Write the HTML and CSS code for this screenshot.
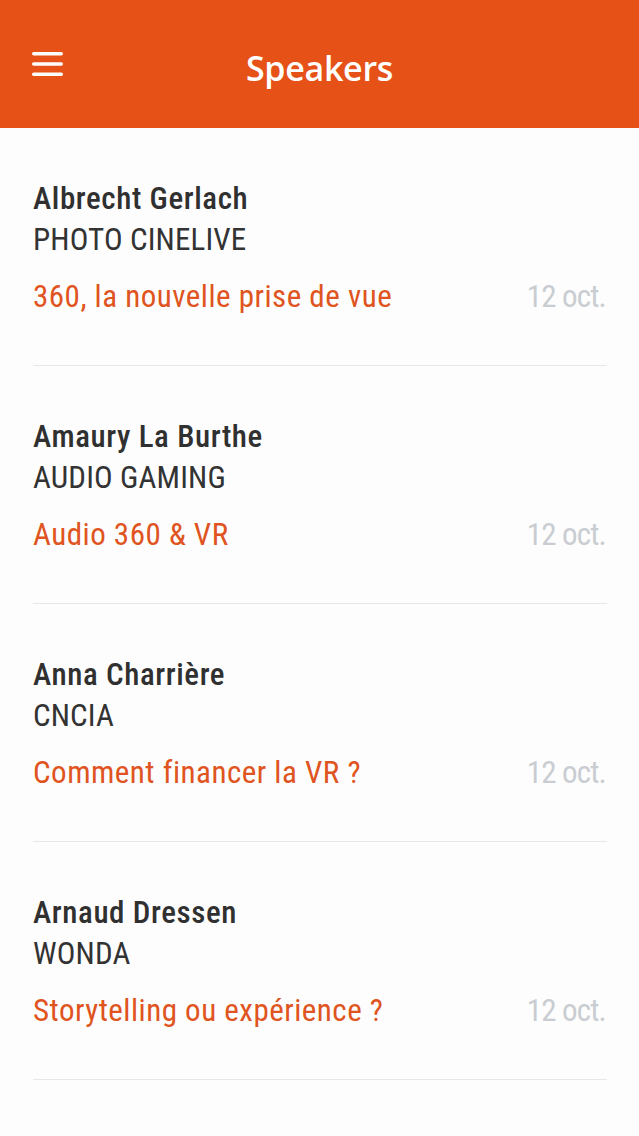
FILE: index.html
```html
<!DOCTYPE html>
<html lang="fr">
<head>
<meta charset="utf-8">
<title>Speakers</title>
<link rel="stylesheet" href="styles.css">
</head>
<body>
<header class="appbar">
  <div class="appbar-left">
    <svg class="menu-icon" width="31" height="24" viewBox="0 0 31 24" aria-hidden="true">
      <rect x="0" y="0" width="31" height="3.4" rx="1.7" fill="#fff"/>
      <rect x="0" y="10.3" width="31" height="3.4" rx="1.7" fill="#fff"/>
      <rect x="0" y="20.6" width="31" height="3.4" rx="1.7" fill="#fff"/>
    </svg>
  </div>
  <h1 class="appbar-title">Speakers</h1>
  <div class="appbar-right"></div>
</header>
<main class="list">
  <article class="item">
    <div class="name">Albrecht Gerlach</div>
    <div class="company">Photo Cinelive</div>
    <div class="talk-row">
      <span class="talk">360, la nouvelle prise de vue</span>
      <span class="date">12 oct.</span>
    </div>
  </article>
  <article class="item">
    <div class="name">Amaury La Burthe</div>
    <div class="company">Audio Gaming</div>
    <div class="talk-row">
      <span class="talk">Audio 360 &amp; VR</span>
      <span class="date">12 oct.</span>
    </div>
  </article>
  <article class="item">
    <div class="name">Anna Charrière</div>
    <div class="company">CNCIA</div>
    <div class="talk-row">
      <span class="talk">Comment financer la VR ?</span>
      <span class="date">12 oct.</span>
    </div>
  </article>
  <article class="item">
    <div class="name">Arnaud Dressen</div>
    <div class="company">Wonda</div>
    <div class="talk-row">
      <span class="talk">Storytelling ou expérience ?</span>
      <span class="date">12 oct.</span>
    </div>
  </article>
</main>
</body>
</html>
```
FILE: styles.css
```css
html, body {
  margin: 0;
  padding: 0;
}
body {
  background: #fdfdfd;
  font-family: "Roboto Condensed", Roboto, sans-serif;
  font-stretch: condensed;
  width: 639px;
  min-height: 1136px;
}
.appbar {
  height: 128px;
  background: #e55116;
  display: grid;
  grid-template-columns: 1fr auto 1fr;
  align-items: center;
}
.appbar-left {
  padding-left: 32px;
  display: flex;
  align-items: center;
}
.menu-icon {
  display: block;
}
.appbar-title {
  margin: 0;
  padding-top: 8px;
  font-family: "Open Sans", "Lato", sans-serif;
  font-stretch: normal;
  font-weight: 600;
  font-size: 34px;
  line-height: normal;
  letter-spacing: -0.3px;
  color: #fff;
}
.list {
  padding: 0 32px 0 33px;
}
.item {
  padding: 50px 0 48px;
  border-bottom: 1px solid #e6e7e9;
  font-size: 31px;
  line-height: 41px;
}
.name {
  font-weight: 500;
  color: #303030;
  letter-spacing: 0.6px;
}
.company {
  color: #333;
  text-transform: uppercase;
  letter-spacing: 0.15px;
}
.talk-row {
  margin-top: 16px;
  display: flex;
  justify-content: space-between;
  align-items: baseline;
}
.talk {
  color: #df5420;
  letter-spacing: 0.5px;
}
.date {
  color: #c9cdd2;
  letter-spacing: -0.8px;
  padding-right: 1px;
}
```
